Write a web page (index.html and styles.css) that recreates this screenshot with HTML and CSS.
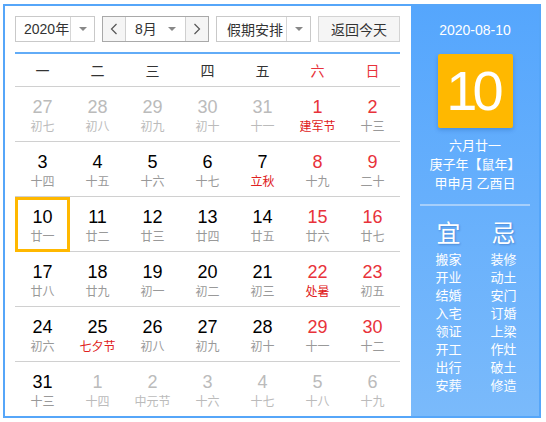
FILE: index.html
```html
<!DOCTYPE html>
<html lang="zh-CN">
<head>
<meta charset="utf-8">
<title>万年历</title>
<link rel="stylesheet" href="styles.css">
</head>
<body>
<div class="cal">
  <div class="main">
    <div class="toolbar">
      <div class="select year"><span class="sel-text">2020年</span><span class="sel-arrow"><i class="tri"></i></span></div>
      <div class="month-group">
        <span class="nav-btn"><svg width="8" height="12" viewBox="0 0 8 12"><path d="M6.5 1 L1.5 6 L6.5 11" fill="none" stroke="#555" stroke-width="1.2"/></svg></span>
        <span class="month-sel"><span class="sel-text">8月</span><i class="tri"></i></span>
        <span class="nav-btn next"><svg width="8" height="12" viewBox="0 0 8 12"><path d="M1.5 1 L6.5 6 L1.5 11" fill="none" stroke="#555" stroke-width="1.2"/></svg></span>
      </div>
      <div class="select holiday"><span class="sel-text">假期安排</span><span class="sel-arrow"><i class="tri"></i></span></div>
      <div class="today-btn">返回今天</div>
    </div>
    <div class="week">
      <span>一</span><span>二</span><span>三</span><span>四</span><span>五</span><span class="red">六</span><span class="red">日</span>
    </div>
    <div class="days">
      <div class="day other"><b>27</b><em>初七</em></div>
      <div class="day other"><b>28</b><em>初八</em></div>
      <div class="day other"><b>29</b><em>初九</em></div>
      <div class="day other"><b>30</b><em>初十</em></div>
      <div class="day other"><b>31</b><em>十一</em></div>
      <div class="day wkend fest"><b>1</b><em>建军节</em></div>
      <div class="day wkend"><b>2</b><em>十三</em></div>

      <div class="day"><b>3</b><em>十四</em></div>
      <div class="day"><b>4</b><em>十五</em></div>
      <div class="day"><b>5</b><em>十六</em></div>
      <div class="day"><b>6</b><em>十七</em></div>
      <div class="day fest"><b>7</b><em>立秋</em></div>
      <div class="day wkend"><b>8</b><em>十九</em></div>
      <div class="day wkend"><b>9</b><em>二十</em></div>

      <div class="day selected"><b>10</b><em>廿一</em></div>
      <div class="day"><b>11</b><em>廿二</em></div>
      <div class="day"><b>12</b><em>廿三</em></div>
      <div class="day"><b>13</b><em>廿四</em></div>
      <div class="day"><b>14</b><em>廿五</em></div>
      <div class="day wkend"><b>15</b><em>廿六</em></div>
      <div class="day wkend"><b>16</b><em>廿七</em></div>

      <div class="day"><b>17</b><em>廿八</em></div>
      <div class="day"><b>18</b><em>廿九</em></div>
      <div class="day"><b>19</b><em>初一</em></div>
      <div class="day"><b>20</b><em>初二</em></div>
      <div class="day"><b>21</b><em>初三</em></div>
      <div class="day wkend fest"><b>22</b><em>处暑</em></div>
      <div class="day wkend"><b>23</b><em>初五</em></div>

      <div class="day"><b>24</b><em>初六</em></div>
      <div class="day fest"><b>25</b><em>七夕节</em></div>
      <div class="day"><b>26</b><em>初八</em></div>
      <div class="day"><b>27</b><em>初九</em></div>
      <div class="day"><b>28</b><em>初十</em></div>
      <div class="day wkend"><b>29</b><em>十一</em></div>
      <div class="day wkend"><b>30</b><em>十二</em></div>

      <div class="day last"><b>31</b><em>十三</em></div>
      <div class="day last other"><b>1</b><em>十四</em></div>
      <div class="day last other"><b>2</b><em>中元节</em></div>
      <div class="day last other"><b>3</b><em>十六</em></div>
      <div class="day last other"><b>4</b><em>十七</em></div>
      <div class="day last other"><b>5</b><em>十八</em></div>
      <div class="day last other"><b>6</b><em>十九</em></div>
    </div>
  </div>
  <div class="side">
    <div class="side-date">2020-08-10</div>
    <div class="big-day">10</div>
    <div class="lunar">
      <div>六月廿一</div>
      <div>庚子年【鼠年】</div>
      <div>甲申月 乙酉日</div>
    </div>
    <div class="divider"></div>
    <div class="yiji">
      <div class="col">
        <div class="yj-title">宜</div>
        <div>搬家</div><div>开业</div><div>结婚</div><div>入宅</div><div>领证</div><div>开工</div><div>出行</div><div>安葬</div>
      </div>
      <div class="col">
        <div class="yj-title">忌</div>
        <div>装修</div><div>动土</div><div>安门</div><div>订婚</div><div>上梁</div><div>作灶</div><div>破土</div><div>修造</div>
      </div>
    </div>
  </div>
</div>
</body>
</html>
```

FILE: styles.css
```css
* { box-sizing: border-box; }
html, body { margin: 0; padding: 0; background: #fff; }
body {
  font-family: "Liberation Sans", "Noto Sans CJK SC", sans-serif;
  color: #333;
}
.cal {
  display: flex;
  width: 538px;
  height: 414px;
  margin: 4px 0 0 3px;
  border: 2px solid #56a6f9;
  background: #fff;
}
.main {
  width: 406px;
  padding: 10px 0 0 10px;
}
.toolbar {
  display: flex;
  gap: 7px;
  height: 26px;
  font-size: 14px;
  font-family: "Noto Sans CJK SC", sans-serif;
}
.select {
  display: flex;
  border: 1px solid #c9c9c9;
  background: #fff;
  height: 26px;
}
.sel-text { line-height: 24px; white-space: nowrap; overflow: hidden; }
.year { width: 80px; }
.year .sel-text { width: 54px; padding-left: 8px; font-family: "Liberation Sans", "Noto Sans CJK SC", sans-serif; }
.sel-arrow {
  flex: 1;
  border-left: 1px solid #d6d6d6;
  display: flex;
  align-items: center;
  justify-content: center;
}
.tri {
  display: block;
  width: 0;
  height: 0;
  border-left: 4px solid transparent;
  border-right: 4px solid transparent;
  border-top: 4px solid #888;
}
.holiday { width: 95px; }
.holiday .sel-text { width: 69px; padding-left: 10px; }
.month-group {
  display: flex;
  width: 107px;
  height: 26px;
  border: 1px solid #a9a9a9;
}
.nav-btn {
  width: 23px;
  display: flex;
  align-items: center;
  justify-content: center;
  background: #f5f5f5;
  border-right: 1px solid #cfcfcf;
}
.nav-btn.next { border-right: 0; border-left: 1px solid #cfcfcf; }
.month-sel {
  flex: 1;
  display: flex;
  align-items: center;
  justify-content: space-between;
  padding: 0 9px 0 9px;
  background: #fff;
}
.month-sel .sel-text { font-family: "Liberation Sans", "Noto Sans CJK SC", sans-serif; }
.today-btn {
  width: 82px;
  height: 26px;
  border: 1px solid #d3d3d3;
  background: #f5f5f5;
  text-align: center;
  line-height: 24px;
  white-space: nowrap;
}
.week {
  display: grid;
  grid-template-columns: repeat(7, 55px);
  margin-top: 10px;
  border-top: 2px solid #62acf7;
  border-bottom: 1px solid #d0d0d0;
  height: 35px;
  align-items: center;
  font-family: "Noto Sans CJK SC", sans-serif;
  font-size: 14px;
  color: #333;
  width: 385px;
}
.week span { text-align: center; }
.week .red { color: #e8323a; }
.days {
  display: grid;
  grid-template-columns: repeat(7, 55px);
  grid-auto-rows: 55px;
  width: 385px;
}
.day {
  display: flex;
  flex-direction: column;
  align-items: center;
  padding-top: 10px;
  border-bottom: 1px solid #d0d0d0;
}
.day.last { border-bottom: 0; }
.day b {
  font-weight: normal;
  font-size: 18px;
  line-height: 20px;
  color: #000;
  font-family: "Liberation Sans", sans-serif;
}
.day em {
  font-style: normal;
  font-size: 12px;
  line-height: 16px;
  margin-top: 1px;
  color: #999;
  font-family: "Noto Sans CJK SC", sans-serif;
}
.day.wkend b { color: #e8323a; }
.day.fest em { color: #e02020; }
.day.other b, .day.other em { color: #bbb; }
.day.selected {
  border: 3px solid #ffb800;
  padding-top: 7px;
}
.side {
  width: 128px;
  background: linear-gradient(#55a6fd, #7abafb);
  color: #fff;
  display: flex;
  flex-direction: column;
  align-items: center;
  font-family: "Noto Sans CJK SC", sans-serif;
}
.side-date {
  margin-top: 15px;
  font-family: "Liberation Sans", sans-serif;
  font-size: 14px;
  line-height: 18px;
}
.big-day {
  margin-top: 15px;
  width: 75px;
  height: 74px;
  background: #ffb800;
  border-radius: 2px;
  box-shadow: 0 2px 4px rgba(0, 60, 140, 0.25);
  text-align: center;
  font-family: "Liberation Sans", sans-serif;
  font-size: 56px;
  line-height: 74px;
  letter-spacing: -5px;
  text-indent: -5px;
}
.lunar {
  margin-top: 7px;
  font-size: 13px;
  line-height: 19px;
  text-align: center;
}
.divider {
  margin-top: 12px;
  width: 110px;
  height: 2px;
  background: #a6cffb;
}
.yiji {
  display: grid;
  grid-template-columns: 44px 44px;
  column-gap: 11px;
  margin-top: 12px;
  padding-left: 2px;
  font-size: 13px;
  line-height: 18px;
  text-align: center;
}
.yj-title {
  font-size: 24px;
  line-height: 28px;
  margin-bottom: 4px;
  text-shadow: 1px 1px 2px rgba(0, 40, 120, 0.3);
}
```
